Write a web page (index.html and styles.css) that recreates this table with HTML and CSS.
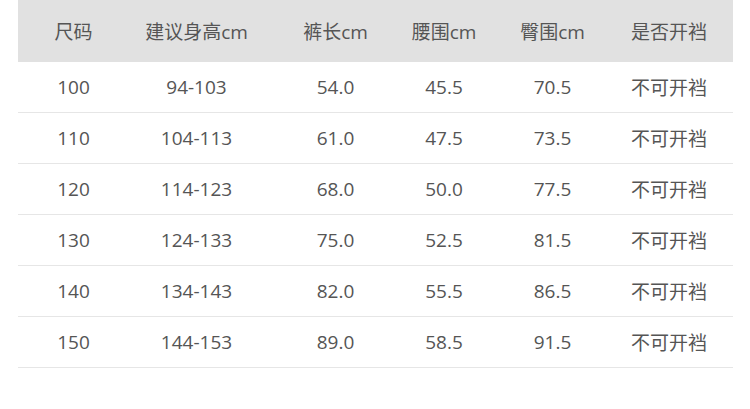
FILE: index.html
```html
<!DOCTYPE html>
<html lang="zh">
<head>
<meta charset="utf-8">
<link rel="stylesheet" href="styles.css">
</head>
<body>
<div class="table">
  <div class="row head">
    <div>尺码</div><div>建议身高cm</div><div>裤长cm</div><div>腰围cm</div><div>臀围cm</div><div>是否开裆</div><div></div>
  </div>
  <div class="row"><div>100</div><div>94-103</div><div>54.0</div><div>45.5</div><div>70.5</div><div>不可开裆</div><div></div></div>
  <div class="row"><div>110</div><div>104-113</div><div>61.0</div><div>47.5</div><div>73.5</div><div>不可开裆</div><div></div></div>
  <div class="row"><div>120</div><div>114-123</div><div>68.0</div><div>50.0</div><div>77.5</div><div>不可开裆</div><div></div></div>
  <div class="row"><div>130</div><div>124-133</div><div>75.0</div><div>52.5</div><div>81.5</div><div>不可开裆</div><div></div></div>
  <div class="row"><div>140</div><div>134-143</div><div>82.0</div><div>55.5</div><div>86.5</div><div>不可开裆</div><div></div></div>
  <div class="row"><div>150</div><div>144-153</div><div>89.0</div><div>58.5</div><div>91.5</div><div>不可开裆</div><div></div></div>
</div>
</body>
</html>
```
FILE: styles.css
```css
html, body { margin: 0; padding: 0; background: #fff; }
body {
  font-family: "Open Sans", "Noto Sans CJK SC", sans-serif;
  font-size: 19px;
  color: #555;
}
.table {
  width: 715px;
  margin-left: 18px;
}
.row {
  display: grid;
  grid-template-columns: 111px 135px 143px 74px 143px 90px 1fr;
  height: 50px;
  align-items: center;
  border-bottom: 1px solid #e6e6e6;
}
.row > div { text-align: center; white-space: nowrap; }
.head {
  height: 62px;
  background: #e1e1e1;
  border-bottom: none;
}
```
